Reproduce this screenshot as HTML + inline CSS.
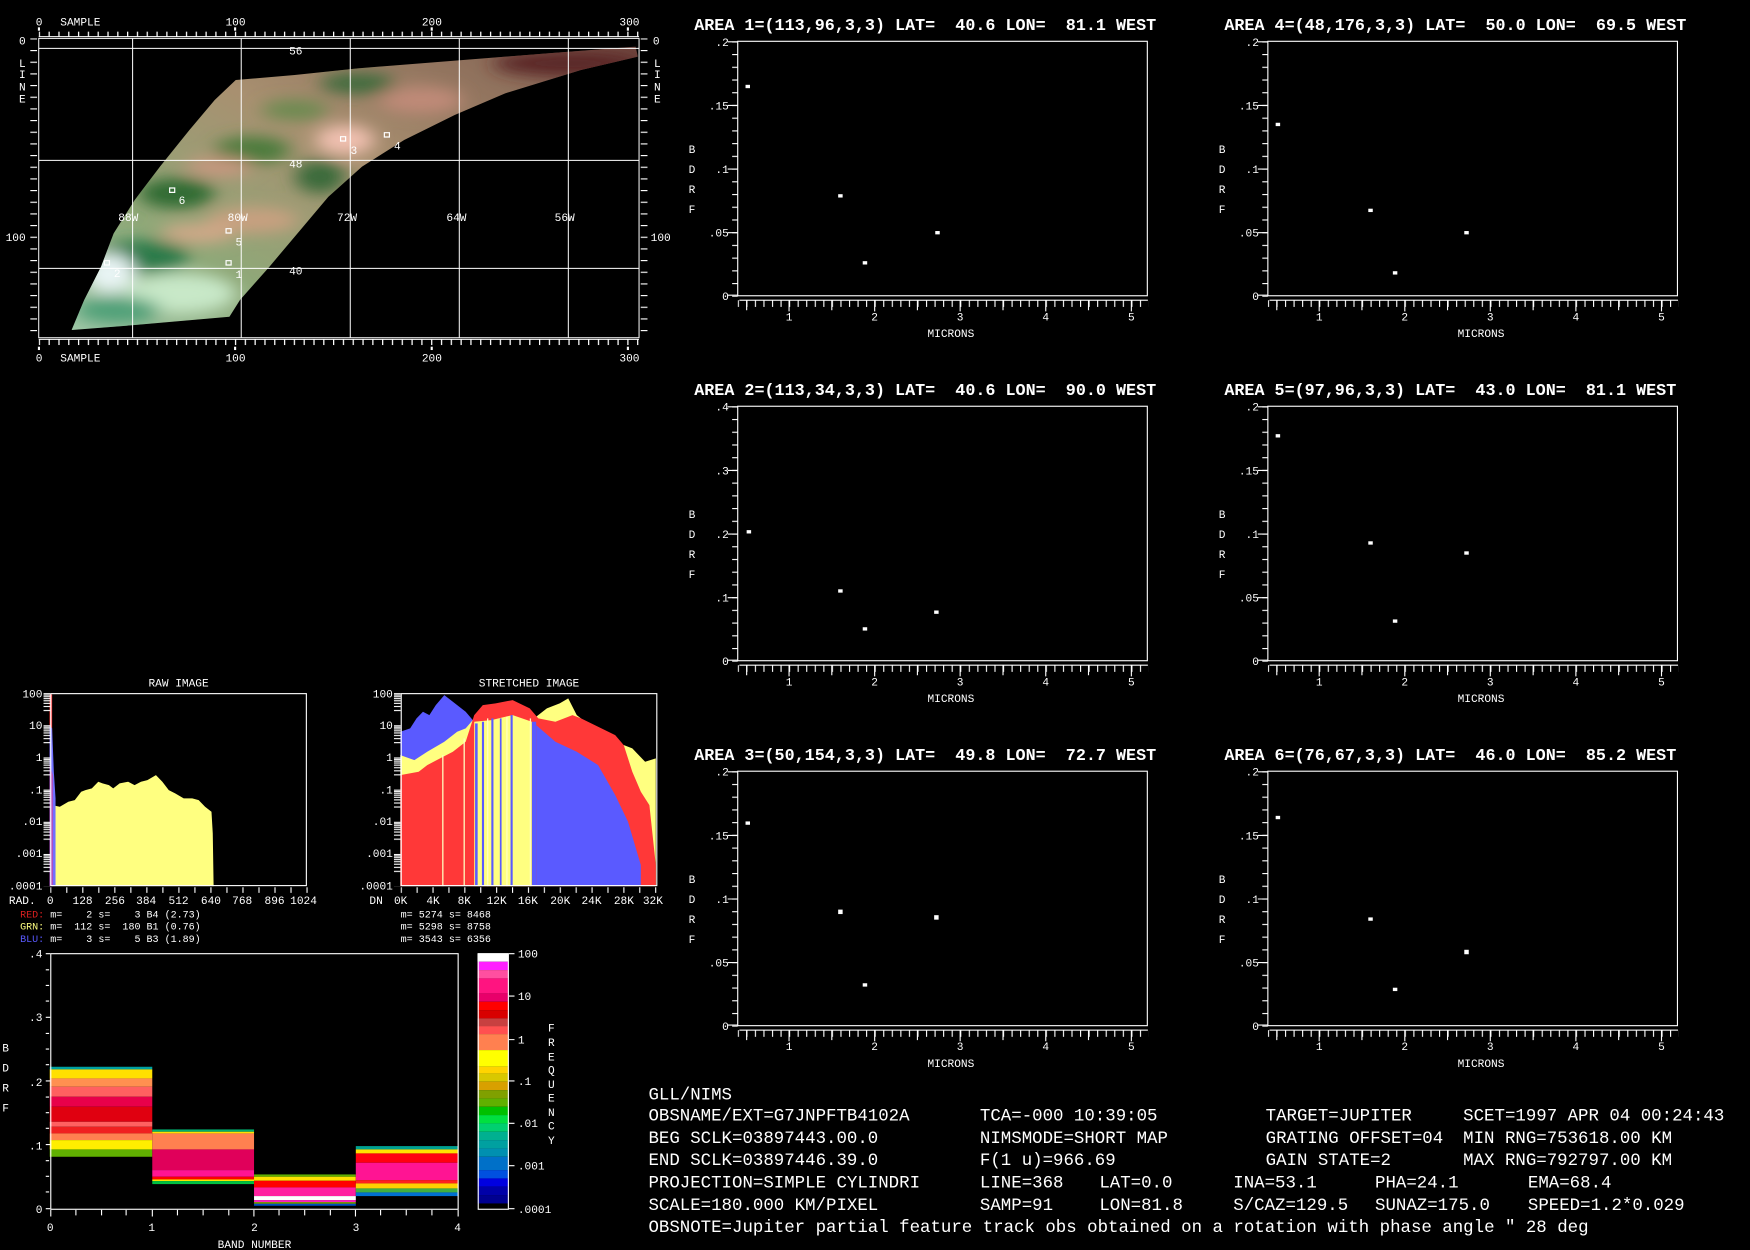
<!DOCTYPE html>
<html><head><meta charset="utf-8">
<style>
html,body{margin:0;padding:0;background:#000;width:1750px;height:1250px;overflow:hidden}
svg{display:block}
text{font-family:"Liberation Mono",monospace;fill:#fff}
.s{font-size:10px}
.t{font-size:15px;font-weight:bold}
.i{font-size:15.6px}
.r{text-anchor:end}
.c{text-anchor:middle}
</style></head><body>
<svg width="1750" height="1250" viewBox="0 0 1568 1120" preserveAspectRatio="none" xmlns="http://www.w3.org/2000/svg">
<defs>
<pattern id="px" width="7.667" height="20" patternUnits="userSpaceOnUse"><rect x="0" y="0" width="1" height="20" fill="#fff"/></pattern>
<pattern id="py" width="20" height="11.4" patternUnits="userSpaceOnUse"><rect x="0" y="0" width="20" height="1" fill="#fff"/></pattern>
<pattern id="plog" width="20" height="28.83" y="621" patternUnits="userSpaceOnUse">
<g fill="#fff"><rect y="0" width="20" height="1"/><rect y="1.3" width="20" height="1"/><rect y="2.8" width="20" height="1"/><rect y="4.5" width="20" height="1"/><rect y="6.4" width="20" height="1"/><rect y="8.7" width="20" height="1"/><rect y="11.5" width="20" height="1"/><rect y="15.1" width="20" height="1"/></g></pattern>
<pattern id="pxr" width="14.35" height="20" x="45" patternUnits="userSpaceOnUse"><rect width="1" height="20" fill="#fff"/></pattern>
<pattern id="pxs" width="14.25" height="20" x="359" patternUnits="userSpaceOnUse"><rect width="1" height="20" fill="#fff"/></pattern>
<pattern id="pmt" width="23.3" height="40" x="92" patternUnits="userSpaceOnUse"><rect width="3" height="40" fill="#fff"/></pattern>
<pattern id="pml" width="40" height="35" y="115" patternUnits="userSpaceOnUse"><rect width="40" height="3.4" fill="#fff"/></pattern>
<clipPath id="mapclip"><path d="M170,990 L200,900 L240,800 L270,700 L320,600 L380,500 L450,390 L510,300 L560,240 L700,225 L850,205 L1100,180 L1300,160 L1510,140 L1515,170 L1380,210 L1200,280 L1080,345 L960,420 L860,500 L780,590 L720,680 L640,800 L570,900 L545,950 L320,975 Z"/></clipPath>
<filter id="bl" x="-20%" y="-20%" width="140%" height="140%"><feGaussianBlur stdDeviation="22"/></filter>
<linearGradient id="mg" x1="0" y1="1" x2="1" y2="0"><stop offset="0" stop-color="#a8d8c0"/><stop offset="0.3" stop-color="#8fa878"/><stop offset="0.55" stop-color="#a89070"/><stop offset="0.8" stop-color="#8a6a58"/><stop offset="1" stop-color="#5a2a2a"/></linearGradient>
</defs>

<!-- ================= MAP ================= -->
<g transform="scale(0.3772,0.2987)">
 <g clip-path="url(#mapclip)">
  <rect x="0" y="0" width="1600" height="1100" fill="url(#mg)"/>
  <g filter="url(#bl)">
   <ellipse cx="420" cy="580" rx="90" ry="45" fill="#2e6a30"/>
   <ellipse cx="600" cy="450" rx="90" ry="40" fill="#4a7a3a"/>
   <ellipse cx="820" cy="420" rx="70" ry="45" fill="#f0c0b0"/>
   <ellipse cx="520" cy="500" rx="80" ry="30" fill="#c89880"/>
   <ellipse cx="850" cy="250" rx="90" ry="30" fill="#3a6a3a"/>
   <ellipse cx="700" cy="330" rx="80" ry="30" fill="#6a8a50"/>
   <ellipse cx="340" cy="770" rx="110" ry="50" fill="#2a7a4a"/>
   <ellipse cx="260" cy="820" rx="60" ry="60" fill="#e8f4f4"/>
   <ellipse cx="430" cy="880" rx="130" ry="60" fill="#c8e8c8"/>
   <ellipse cx="280" cy="930" rx="100" ry="40" fill="#50a078"/>
   <ellipse cx="600" cy="660" rx="110" ry="40" fill="#c8a080"/>
   <ellipse cx="470" cy="700" rx="90" ry="30" fill="#d0a888"/>
   <ellipse cx="760" cy="530" rx="60" ry="50" fill="#3a6a3a"/>
   <ellipse cx="1000" cy="300" rx="100" ry="40" fill="#c08a78"/>
   <ellipse cx="1350" cy="190" rx="180" ry="40" fill="#5a2626"/>
  </g>
 </g>
 <g fill="none" stroke="#fff" vector-effect="non-scaling-stroke">
  <rect x="92" y="115" width="1426" height="898" vector-effect="non-scaling-stroke"/>
  <path d="M315,115V1013M573,115V1013M832,115V1013M1091,115V1013M1350,115V1013M92,145H1518M92,481H1518M92,805H1518M92,110H1518M92,1018H1518" vector-effect="non-scaling-stroke"/>
  <g stroke-width="1.2">
  <rect x="537" y="782" width="12" height="13" vector-effect="non-scaling-stroke"/>
  <rect x="248" y="782" width="12" height="13" vector-effect="non-scaling-stroke"/>
  <rect x="809" y="410" width="12" height="13" vector-effect="non-scaling-stroke"/>
  <rect x="913" y="398" width="12" height="13" vector-effect="non-scaling-stroke"/>
  <rect x="537" y="686" width="12" height="13" vector-effect="non-scaling-stroke"/>
  <rect x="403" y="564" width="12" height="13" vector-effect="non-scaling-stroke"/>
  </g>
 </g>
 <rect x="92" y="95" width="1426" height="15" fill="url(#pmt)"/>
 <rect x="92" y="1018" width="1426" height="17" fill="url(#pmt)"/>
 <rect x="72" y="115" width="16" height="898" fill="url(#pml)"/>
 <rect x="1522" y="115" width="16" height="898" fill="url(#pml)"/>
 <g fill="#fff"><rect x="90" y="82" width="5" height="10"/><rect x="556" y="82" width="5" height="10"/><rect x="1023" y="82" width="5" height="10"/><rect x="1489" y="82" width="5" height="10"/>
 <rect x="90" y="1040" width="5" height="10"/><rect x="556" y="1040" width="5" height="10"/><rect x="1023" y="1040" width="5" height="10"/><rect x="1489" y="1040" width="5" height="10"/></g>
</g>
<g class="s">
<text class="s" x="32" y="23">0</text><text class="s" x="54" y="23">SAMPLE</text><text class="s c" x="211" y="23">100</text><text class="s c" x="387" y="23">200</text><text class="s c" x="564" y="23">300</text>
<text class="s" x="32" y="324">0</text><text class="s" x="54" y="324">SAMPLE</text><text class="s c" x="211" y="324">100</text><text class="s c" x="387" y="324">200</text><text class="s c" x="564" y="324">300</text>
<text class="s" x="17" y="40">0</text><text class="s" x="5" y="216">100</text>
<text class="s" x="585" y="40">0</text><text class="s" x="583" y="216">100</text>
<text class="s" x="17" y="60">L</text><text class="s" x="17" y="70">I</text><text class="s" x="17" y="81">N</text><text class="s" x="17" y="92">E</text>
<text class="s" x="586" y="60">L</text><text class="s" x="586" y="70">I</text><text class="s" x="586" y="81">N</text><text class="s" x="586" y="92">E</text>
<text class="s c" x="265" y="49">56</text><text class="s c" x="265" y="150">48</text><text class="s c" x="265" y="246">40</text>
<text class="s c" x="115" y="198">88W</text><text class="s c" x="213" y="198">80W</text><text class="s c" x="311" y="198">72W</text><text class="s c" x="409" y="198">64W</text><text class="s c" x="506" y="198">56W</text>
<text class="s" x="211" y="249">1</text><text class="s" x="102" y="248">2</text><text class="s" x="314" y="138">3</text><text class="s" x="353" y="134">4</text><text class="s" x="211" y="220">5</text><text class="s" x="160" y="183">6</text>
</g>

<!-- ================= PANELS ================= -->
<g transform="translate(661,37)">
<text class="t" x="-39" y="-10" xml:space="preserve">AREA 1=(113,96,3,3) LAT=  40.6 LON=  81.1 WEST</text>
<rect x="0" y="0" width="367" height="228" fill="none" stroke="#fff"/>
<rect x="1.5" y="231.5" width="366" height="1" fill="#fff"/>
<rect x="0" y="232" width="368" height="6" fill="url(#px)"/>
<path d="M46,232v10M122.7,232v10M199.3,232v10M276,232v10M352.7,232v10M8,232v9M84.3,232v9M161,232v9M237.7,232v9M314.3,232v9" stroke="#fff"/>
<rect x="-5" y="0" width="5" height="229" fill="url(#py)"/>
<path d="M-9,0.5h9M-9,57.5h9M-9,114.5h9M-9,171.5h9M-9,227.5h9" stroke="#fff"/>
<text class="s r" x="-8" y="4">.2</text><text class="s r" x="-8" y="61">.15</text><text class="s r" x="-8" y="118">.1</text><text class="s r" x="-8" y="175">.05</text><text class="s r" x="-8" y="232">0</text>
<text class="s c" x="46" y="250">1</text><text class="s c" x="122.7" y="250">2</text><text class="s c" x="199.3" y="250">3</text><text class="s c" x="276" y="250">4</text><text class="s c" x="352.7" y="250">5</text>
<text class="s c" x="191" y="265">MICRONS</text>
<text class="s" x="-44" y="100">B</text><text class="s" x="-44" y="118">D</text><text class="s" x="-44" y="136">R</text><text class="s" x="-44" y="154">F</text>
<g fill="#fff"><rect x="7" y="39" width="4" height="3"/><rect x="90" y="137" width="4" height="3"/><rect x="112" y="197" width="4" height="3"/><rect x="177" y="170" width="4" height="3"/></g>
</g>

<g transform="translate(1136,37)">
<text class="t" x="-39" y="-10" xml:space="preserve">AREA 4=(48,176,3,3) LAT=  50.0 LON=  69.5 WEST</text>
<rect x="0" y="0" width="367" height="228" fill="none" stroke="#fff"/>
<rect x="1.5" y="231.5" width="366" height="1" fill="#fff"/>
<rect x="0" y="232" width="368" height="6" fill="url(#px)"/>
<path d="M46,232v10M122.7,232v10M199.3,232v10M276,232v10M352.7,232v10M8,232v9M84.3,232v9M161,232v9M237.7,232v9M314.3,232v9" stroke="#fff"/>
<rect x="-5" y="0" width="5" height="229" fill="url(#py)"/>
<path d="M-9,0.5h9M-9,57.5h9M-9,114.5h9M-9,171.5h9M-9,227.5h9" stroke="#fff"/>
<text class="s r" x="-8" y="4">.2</text><text class="s r" x="-8" y="61">.15</text><text class="s r" x="-8" y="118">.1</text><text class="s r" x="-8" y="175">.05</text><text class="s r" x="-8" y="232">0</text>
<text class="s c" x="46" y="250">1</text><text class="s c" x="122.7" y="250">2</text><text class="s c" x="199.3" y="250">3</text><text class="s c" x="276" y="250">4</text><text class="s c" x="352.7" y="250">5</text>
<text class="s c" x="191" y="265">MICRONS</text>
<text class="s" x="-44" y="100">B</text><text class="s" x="-44" y="118">D</text><text class="s" x="-44" y="136">R</text><text class="s" x="-44" y="154">F</text>
<g fill="#fff"><rect x="7" y="73" width="4" height="3"/><rect x="90" y="150" width="4" height="3"/><rect x="112" y="206" width="4" height="3"/><rect x="176" y="170" width="4" height="3"/></g>
</g>

<g transform="translate(661,364)">
<text class="t" x="-39" y="-10" xml:space="preserve">AREA 2=(113,34,3,3) LAT=  40.6 LON=  90.0 WEST</text>
<rect x="0" y="0" width="367" height="228" fill="none" stroke="#fff"/>
<rect x="1.5" y="231.5" width="366" height="1" fill="#fff"/>
<rect x="0" y="232" width="368" height="6" fill="url(#px)"/>
<path d="M46,232v10M122.7,232v10M199.3,232v10M276,232v10M352.7,232v10M8,232v9M84.3,232v9M161,232v9M237.7,232v9M314.3,232v9" stroke="#fff"/>
<rect x="-5" y="0" width="5" height="229" fill="url(#py)"/>
<path d="M-9,0.5h9M-9,57.5h9M-9,114.5h9M-9,171.5h9M-9,227.5h9" stroke="#fff"/>
<text class="s r" x="-8" y="4">.4</text><text class="s r" x="-8" y="61">.3</text><text class="s r" x="-8" y="118">.2</text><text class="s r" x="-8" y="175">.1</text><text class="s r" x="-8" y="232">0</text>
<text class="s c" x="46" y="250">1</text><text class="s c" x="122.7" y="250">2</text><text class="s c" x="199.3" y="250">3</text><text class="s c" x="276" y="250">4</text><text class="s c" x="352.7" y="250">5</text>
<text class="s c" x="191" y="265">MICRONS</text>
<text class="s" x="-44" y="100">B</text><text class="s" x="-44" y="118">D</text><text class="s" x="-44" y="136">R</text><text class="s" x="-44" y="154">F</text>
<g fill="#fff"><rect x="8" y="111" width="4" height="3"/><rect x="90" y="164" width="4" height="3"/><rect x="112" y="198" width="4" height="3"/><rect x="176" y="183" width="4" height="3"/></g>
</g>

<g transform="translate(1136,364)">
<text class="t" x="-39" y="-10" xml:space="preserve">AREA 5=(97,96,3,3) LAT=  43.0 LON=  81.1 WEST</text>
<rect x="0" y="0" width="367" height="228" fill="none" stroke="#fff"/>
<rect x="1.5" y="231.5" width="366" height="1" fill="#fff"/>
<rect x="0" y="232" width="368" height="6" fill="url(#px)"/>
<path d="M46,232v10M122.7,232v10M199.3,232v10M276,232v10M352.7,232v10M8,232v9M84.3,232v9M161,232v9M237.7,232v9M314.3,232v9" stroke="#fff"/>
<rect x="-5" y="0" width="5" height="229" fill="url(#py)"/>
<path d="M-9,0.5h9M-9,57.5h9M-9,114.5h9M-9,171.5h9M-9,227.5h9" stroke="#fff"/>
<text class="s r" x="-8" y="4">.2</text><text class="s r" x="-8" y="61">.15</text><text class="s r" x="-8" y="118">.1</text><text class="s r" x="-8" y="175">.05</text><text class="s r" x="-8" y="232">0</text>
<text class="s c" x="46" y="250">1</text><text class="s c" x="122.7" y="250">2</text><text class="s c" x="199.3" y="250">3</text><text class="s c" x="276" y="250">4</text><text class="s c" x="352.7" y="250">5</text>
<text class="s c" x="191" y="265">MICRONS</text>
<text class="s" x="-44" y="100">B</text><text class="s" x="-44" y="118">D</text><text class="s" x="-44" y="136">R</text><text class="s" x="-44" y="154">F</text>
<g fill="#fff"><rect x="7" y="25" width="4" height="3"/><rect x="90" y="121" width="4" height="3"/><rect x="112" y="191" width="4" height="3"/><rect x="176" y="130" width="4" height="3"/></g>
</g>

<g transform="translate(661,691)">
<text class="t" x="-39" y="-10" xml:space="preserve">AREA 3=(50,154,3,3) LAT=  49.8 LON=  72.7 WEST</text>
<rect x="0" y="0" width="367" height="228" fill="none" stroke="#fff"/>
<rect x="1.5" y="231.5" width="366" height="1" fill="#fff"/>
<rect x="0" y="232" width="368" height="6" fill="url(#px)"/>
<path d="M46,232v10M122.7,232v10M199.3,232v10M276,232v10M352.7,232v10M8,232v9M84.3,232v9M161,232v9M237.7,232v9M314.3,232v9" stroke="#fff"/>
<rect x="-5" y="0" width="5" height="229" fill="url(#py)"/>
<path d="M-9,0.5h9M-9,57.5h9M-9,114.5h9M-9,171.5h9M-9,227.5h9" stroke="#fff"/>
<text class="s r" x="-8" y="4">.2</text><text class="s r" x="-8" y="61">.15</text><text class="s r" x="-8" y="118">.1</text><text class="s r" x="-8" y="175">.05</text><text class="s r" x="-8" y="232">0</text>
<text class="s c" x="46" y="250">1</text><text class="s c" x="122.7" y="250">2</text><text class="s c" x="199.3" y="250">3</text><text class="s c" x="276" y="250">4</text><text class="s c" x="352.7" y="250">5</text>
<text class="s c" x="191" y="265">MICRONS</text>
<text class="s" x="-44" y="100">B</text><text class="s" x="-44" y="118">D</text><text class="s" x="-44" y="136">R</text><text class="s" x="-44" y="154">F</text>
<g fill="#fff"><rect x="7" y="45" width="4" height="3"/><rect x="90" y="124" width="4" height="4"/><rect x="112" y="190" width="4" height="3"/><rect x="176" y="129" width="4" height="4"/></g>
</g>

<g transform="translate(1136,691)">
<text class="t" x="-39" y="-10" xml:space="preserve">AREA 6=(76,67,3,3) LAT=  46.0 LON=  85.2 WEST</text>
<rect x="0" y="0" width="367" height="228" fill="none" stroke="#fff"/>
<rect x="1.5" y="231.5" width="366" height="1" fill="#fff"/>
<rect x="0" y="232" width="368" height="6" fill="url(#px)"/>
<path d="M46,232v10M122.7,232v10M199.3,232v10M276,232v10M352.7,232v10M8,232v9M84.3,232v9M161,232v9M237.7,232v9M314.3,232v9" stroke="#fff"/>
<rect x="-5" y="0" width="5" height="229" fill="url(#py)"/>
<path d="M-9,0.5h9M-9,57.5h9M-9,114.5h9M-9,171.5h9M-9,227.5h9" stroke="#fff"/>
<text class="s r" x="-8" y="4">.2</text><text class="s r" x="-8" y="61">.15</text><text class="s r" x="-8" y="118">.1</text><text class="s r" x="-8" y="175">.05</text><text class="s r" x="-8" y="232">0</text>
<text class="s c" x="46" y="250">1</text><text class="s c" x="122.7" y="250">2</text><text class="s c" x="199.3" y="250">3</text><text class="s c" x="276" y="250">4</text><text class="s c" x="352.7" y="250">5</text>
<text class="s c" x="191" y="265">MICRONS</text>
<text class="s" x="-44" y="100">B</text><text class="s" x="-44" y="118">D</text><text class="s" x="-44" y="136">R</text><text class="s" x="-44" y="154">F</text>
<g fill="#fff"><rect x="7" y="40" width="4" height="3"/><rect x="90" y="131" width="4" height="3"/><rect x="112" y="194" width="4" height="3"/><rect x="176" y="160" width="4" height="4"/></g>
</g>

<!-- ================= HISTOGRAMS ================= -->
<g transform="translate(0,595.9) scale(0.3828,0.2987)">
 <path d="M122,663 L122,420 L140,425 L160,410 L175,405 L190,380 L200,375 L215,370 L230,350 L240,355 L255,360 L265,370 L280,355 L300,350 L315,360 L330,350 L345,345 L365,330 L380,350 L395,375 L410,385 L430,400 L450,400 L465,405 L480,425 L495,440 L498,505 L500,663 Z" fill="#ffff80"/>
 <rect x="116" y="88" width="6" height="575" fill="#ff3838"/>
 <path d="M116,180 L122,190 L126,320 L130,400 L130,663 L116,663 Z" fill="#7070ff"/>
 <path d="M116,300 L124,330 L124,663 L116,663 Z" fill="#b050c0"/>
 <!-- stretched -->
 <path d="M937,200 L960,190 L975,160 L990,140 L1005,150 L1020,120 L1040,90 L1060,110 L1090,140 L1110,170 L1110,663 L937,663 Z" fill="#5a5aff"/>
 <path d="M937,270 L970,285 L1000,260 L1040,230 L1070,200 L1090,190 L1110,160 L1150,150 L1200,140 L1250,160 L1280,130 L1310,115 L1330,100 L1350,150 L1400,200 L1440,230 L1480,250 L1510,290 L1535,280 L1535,663 L937,663 Z" fill="#ffff80"/>
 <path d="M937,330 L980,320 L1000,300 L1030,280 L1060,260 L1090,230 L1110,150 L1130,120 L1160,115 L1200,105 L1240,130 L1260,160 L1300,170 L1340,150 L1360,160 L1400,185 L1440,210 L1460,240 L1480,320 L1500,380 L1520,420 L1535,600 L1535,663 L937,663 Z" fill="#ff3838"/>
 <path d="M1110,170 L1150,165 L1200,150 L1245,170 L1245,663 L1110,663 Z" fill="#ffff80"/>
 <path d="M1255,180 L1300,230 L1350,260 L1400,300 L1440,390 L1470,470 L1500,600 L1500,663 L1255,663 Z" fill="#5a5aff"/>
 <g fill="#5a5aff"><rect x="1112" y="175" width="6" height="488"/><rect x="1128" y="170" width="5" height="493"/><rect x="1150" y="160" width="5" height="503"/><rect x="1170" y="160" width="4" height="503"/><rect x="1195" y="150" width="5" height="513"/><rect x="1245" y="170" width="10" height="493"/></g>
 <g fill="#ffffc0"><rect x="1035" y="270" width="3" height="393"/><rect x="1085" y="220" width="3" height="443"/><rect x="1140" y="160" width="3" height="503"/><rect x="1185" y="155" width="3" height="508"/><rect x="1240" y="160" width="3" height="503"/></g>
</g>
<g fill="none" stroke="#fff"><rect x="45.5" y="621.5" width="229" height="172"/><rect x="359.5" y="621.5" width="229" height="172"/></g>
<rect x="39" y="621" width="6" height="173" fill="url(#plog)"/>
<rect x="353" y="621" width="6" height="173" fill="url(#plog)"/>
<rect x="45" y="795" width="231" height="5" fill="url(#pxr)"/>
<rect x="359" y="795" width="230" height="5" fill="url(#pxs)"/>
<text class="s c" x="160" y="615">RAW IMAGE</text>
<text class="s c" x="474" y="615">STRETCHED IMAGE</text>
<g class="s">
<text class="s r" x="38" y="625">100</text><text class="s r" x="38" y="653">10</text><text class="s r" x="38" y="682">1</text><text class="s r" x="38" y="711">.1</text><text class="s r" x="38" y="739">.01</text><text class="s r" x="38" y="768">.001</text><text class="s r" x="38" y="797">.0001</text>
<text class="s r" x="352" y="625">100</text><text class="s r" x="352" y="653">10</text><text class="s r" x="352" y="682">1</text><text class="s r" x="352" y="711">.1</text><text class="s r" x="352" y="739">.01</text><text class="s r" x="352" y="768">.001</text><text class="s r" x="352" y="797">.0001</text>
<text class="s" x="8" y="810">RAD.</text>
<text class="s c" x="45" y="810">0</text><text class="s c" x="74" y="810">128</text><text class="s c" x="103" y="810">256</text><text class="s c" x="131" y="810">384</text><text class="s c" x="160" y="810">512</text><text class="s c" x="189" y="810">640</text><text class="s c" x="217" y="810">768</text><text class="s c" x="246" y="810">896</text><text class="s c" x="272" y="810">1024</text>
<text class="s" x="331" y="810">DN</text>
<text class="s c" x="359" y="810">0K</text><text class="s c" x="388" y="810">4K</text><text class="s c" x="416" y="810">8K</text><text class="s c" x="445" y="810">12K</text><text class="s c" x="473" y="810">16K</text><text class="s c" x="502" y="810">20K</text><text class="s c" x="530" y="810">24K</text><text class="s c" x="559" y="810">28K</text><text class="s c" x="585" y="810">32K</text>
</g>
<g style="font-size:9px">
<text x="18" y="822" style="font-size:9px" xml:space="preserve"><tspan style="fill:#e02020">RED:</tspan> m=    2 s=    3 B4 (2.73)</text>
<text x="18" y="833" style="font-size:9px" xml:space="preserve"><tspan style="fill:#ffff80">GRN:</tspan> m=  112 s=  180 B1 (0.76)</text>
<text x="18" y="844" style="font-size:9px" xml:space="preserve"><tspan style="fill:#5a5aff">BLU:</tspan> m=    3 s=    5 B3 (1.89)</text>
<text x="359" y="822" style="font-size:9px" xml:space="preserve">m= 5274 s= 8468</text>
<text x="359" y="833" style="font-size:9px" xml:space="preserve">m= 5298 s= 8758</text>
<text x="359" y="844" style="font-size:9px" xml:space="preserve">m= 3543 s= 6356</text>
</g>

<!-- ================= BAND PLOT ================= -->
<g transform="translate(0,842.3) scale(0.3428,0.2987)">
 <!-- band 0 -->
 <rect x="130" y="380" width="268" height="8" fill="#00a0a0"/><rect x="130" y="388" width="268" height="27" fill="#ffe000"/><rect x="130" y="415" width="268" height="25" fill="#ff9050"/><rect x="130" y="440" width="268" height="30" fill="#ff6060"/><rect x="130" y="470" width="268" height="30" fill="#e8004a"/><rect x="130" y="500" width="268" height="45" fill="#e00010"/><rect x="130" y="545" width="268" height="15" fill="#ff6060"/><rect x="130" y="560" width="268" height="20" fill="#f02020"/><rect x="130" y="580" width="268" height="20" fill="#ff8050"/><rect x="130" y="600" width="268" height="28" fill="#ffee00"/><rect x="130" y="628" width="268" height="22" fill="#60b000"/>
 <!-- band 1 -->
 <rect x="398" y="568" width="266" height="7" fill="#00b070"/><rect x="398" y="575" width="266" height="5" fill="#ffe000"/><rect x="398" y="580" width="266" height="48" fill="#ff8050"/><rect x="398" y="628" width="266" height="62" fill="#e0005a"/><rect x="398" y="690" width="266" height="20" fill="#ff1493"/><rect x="398" y="710" width="266" height="8" fill="#ff0000"/><rect x="398" y="718" width="266" height="5" fill="#ffe000"/><rect x="398" y="723" width="266" height="9" fill="#00c040"/>
 <!-- band 2 -->
 <rect x="664" y="703" width="266" height="7" fill="#60b000"/><rect x="664" y="710" width="266" height="12" fill="#ffe000"/><rect x="664" y="722" width="266" height="20" fill="#ff0000"/><rect x="664" y="742" width="266" height="26" fill="#ff20a0"/><rect x="664" y="768" width="266" height="12" fill="#ffffff"/><rect x="664" y="780" width="266" height="6" fill="#ff20c0"/><rect x="664" y="786" width="266" height="5" fill="#80a000"/><rect x="664" y="791" width="266" height="6" fill="#0050c0"/>
 <!-- band 3 -->
 <rect x="930" y="618" width="268" height="10" fill="#00a090"/><rect x="930" y="628" width="268" height="12" fill="#ffe000"/><rect x="930" y="640" width="268" height="28" fill="#ff0010"/><rect x="930" y="668" width="268" height="52" fill="#ff1493"/><rect x="930" y="720" width="268" height="10" fill="#ff2020"/><rect x="930" y="730" width="268" height="15" fill="#ffd000"/><rect x="930" y="745" width="268" height="12" fill="#40b040"/><rect x="930" y="757" width="268" height="11" fill="#0070d0"/>
 <!-- colorbar -->
 <rect x="1248" y="40" width="80" height="25" fill="#ffffff"/><rect x="1248" y="65" width="80" height="25" fill="#ff20ff"/><rect x="1248" y="90" width="80" height="25" fill="#ff4fa0"/><rect x="1248" y="115" width="80" height="45" fill="#ff1480"/><rect x="1248" y="160" width="80" height="25" fill="#e8006a"/><rect x="1248" y="185" width="80" height="25" fill="#ff0000"/><rect x="1248" y="210" width="80" height="25" fill="#d80000"/><rect x="1248" y="235" width="80" height="23" fill="#c84040"/><rect x="1248" y="258" width="80" height="24" fill="#ff5050"/><rect x="1248" y="282" width="80" height="48" fill="#ff8050"/><rect x="1248" y="330" width="80" height="50" fill="#ffff00"/><rect x="1248" y="380" width="80" height="20" fill="#ffd400"/><rect x="1248" y="400" width="80" height="25" fill="#d8c800"/><rect x="1248" y="425" width="80" height="25" fill="#d8a000"/><rect x="1248" y="450" width="80" height="25" fill="#80a000"/><rect x="1248" y="475" width="80" height="25" fill="#60b000"/><rect x="1248" y="500" width="80" height="25" fill="#00c000"/><rect x="1248" y="525" width="80" height="25" fill="#00e040"/><rect x="1248" y="550" width="80" height="25" fill="#00d070"/><rect x="1248" y="575" width="80" height="25" fill="#00b090"/><rect x="1248" y="600" width="80" height="25" fill="#00a0a0"/><rect x="1248" y="625" width="80" height="25" fill="#0090b0"/><rect x="1248" y="650" width="80" height="40" fill="#0070c8"/><rect x="1248" y="690" width="80" height="25" fill="#0050e0"/><rect x="1248" y="715" width="80" height="25" fill="#0000e0"/><rect x="1248" y="740" width="80" height="25" fill="#0000a8"/><rect x="1248" y="765" width="80" height="25" fill="#000090"/>
</g>
<rect x="45.5" y="854.5" width="365" height="229" fill="none" stroke="#fff"/>
<rect x="428.5" y="854.5" width="27" height="229" fill="none" stroke="#fff"/>
<path d="M41,854.5h4M41,869h3M41,883h3M41,897h3M41,911.5h4M41,926h3M41,940h3M41,954h3M41,968.5h4M41,983h3M41,997h3M41,1011h3M41,1025.5h4M41,1040h3M41,1054h3M41,1068h3M41,1083h4" stroke="#fff"/>
<path d="M45.5,1084v6M68,1084v5M91,1084v5M113,1084v5M136.5,1084v6M159,1084v5M182,1084v5M205,1084v5M227.5,1084v6M250,1084v5M273,1084v5M296,1084v5M318.5,1084v6M341,1084v5M364,1084v5M387,1084v5M410.5,1084v6" stroke="#fff"/>
<path d="M456,854.5h5M456,892.5h5M456,931.5h5M456,968.5h5M456,1006.5h5M456,1044.5h5M456,1083h5" stroke="#fff"/>
<g class="s">
<text class="s r" x="38" y="858">.4</text><text class="s r" x="38" y="915">.3</text><text class="s r" x="38" y="973">.2</text><text class="s r" x="38" y="1030">.1</text><text class="s r" x="38" y="1087">0</text>
<text class="s" x="2" y="942">B</text><text class="s" x="2" y="960">D</text><text class="s" x="2" y="978">R</text><text class="s" x="2" y="996">F</text>
<text class="s c" x="45" y="1103">0</text><text class="s c" x="136" y="1103">1</text><text class="s c" x="228" y="1103">2</text><text class="s c" x="319" y="1103">3</text><text class="s c" x="410" y="1103">4</text>
<text class="s c" x="228" y="1118">BAND NUMBER</text>
<text class="s" x="464" y="858">100</text><text class="s" x="464" y="896">10</text><text class="s" x="464" y="935">1</text><text class="s" x="464" y="972">.1</text><text class="s" x="464" y="1010">.01</text><text class="s" x="464" y="1048">.001</text><text class="s" x="464" y="1087">.0001</text>
<text class="s" x="491" y="924">F</text><text class="s" x="491" y="937">R</text><text class="s" x="491" y="950">E</text><text class="s" x="491" y="962">Q</text><text class="s" x="491" y="975">U</text><text class="s" x="491" y="987">E</text><text class="s" x="491" y="1000">N</text><text class="s" x="491" y="1012">C</text><text class="s" x="491" y="1025">Y</text>
</g>

<!-- ================= INFO TEXT ================= -->
<g class="i" xml:space="preserve">
<text class="i" x="581" y="985">GLL/NIMS</text>
<text class="i" x="581" y="1004">OBSNAME/EXT=G7JNPFTB4102A</text><text class="i" x="878" y="1004">TCA=-000 10:39:05</text><text class="i" x="1134" y="1004">TARGET=JUPITER</text><text class="i" x="1311" y="1004">SCET=1997 APR 04 00:24:43</text>
<text class="i" x="581" y="1024">BEG SCLK=03897443.00.0</text><text class="i" x="878" y="1024">NIMSMODE=SHORT MAP</text><text class="i" x="1134" y="1024">GRATING OFFSET=04</text><text class="i" x="1311" y="1024">MIN RNG=753618.00 KM</text>
<text class="i" x="581" y="1044">END SCLK=03897446.39.0</text><text class="i" x="878" y="1044">F(1 u)=966.69</text><text class="i" x="1134" y="1044">GAIN STATE=2</text><text class="i" x="1311" y="1044">MAX RNG=792797.00 KM</text>
<text class="i" x="581" y="1064">PROJECTION=SIMPLE CYLINDRI</text><text class="i" x="878" y="1064">LINE=368</text><text class="i" x="985" y="1064">LAT=0.0</text><text class="i" x="1105" y="1064">INA=53.1</text><text class="i" x="1232" y="1064">PHA=24.1</text><text class="i" x="1369" y="1064">EMA=68.4</text>
<text class="i" x="581" y="1084">SCALE=180.000 KM/PIXEL</text><text class="i" x="878" y="1084">SAMP=91</text><text class="i" x="985" y="1084">LON=81.8</text><text class="i" x="1105" y="1084">S/CAZ=129.5</text><text class="i" x="1232" y="1084">SUNAZ=175.0</text><text class="i" x="1369" y="1084">SPEED=1.2*0.029</text>
<text class="i" x="581" y="1104">OBSNOTE=Jupiter partial feature track obs obtained on a rotation with phase angle " 28 deg</text>
</g>
</svg>
</body></html>
